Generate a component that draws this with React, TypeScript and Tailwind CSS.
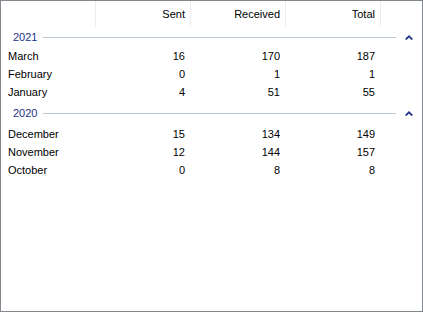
import React from 'react';

type Row = { month: string; sent: number; received: number; total: number };

const groups: { year: string; rows: Row[] }[] = [
  {
    year: '2021',
    rows: [
      { month: 'March', sent: 16, received: 170, total: 187 },
      { month: 'February', sent: 0, received: 1, total: 1 },
      { month: 'January', sent: 4, received: 51, total: 55 },
    ],
  },
  {
    year: '2020',
    rows: [
      { month: 'December', sent: 15, received: 134, total: 149 },
      { month: 'November', sent: 12, received: 144, total: 157 },
      { month: 'October', sent: 0, received: 8, total: 8 },
    ],
  },
];

function Chevron() {
  return (
    <svg width="8" height="5" viewBox="0 0 8 5" className="block">
      <path d="M0 4 L4 0 L8 4 L6.5 5 L4 2.5 L1.5 5 Z" fill="#1e3287" />
    </svg>
  );
}

export default function App() {
  return (
    <div
      className="w-[423px] h-[312px] bg-white border border-[#828790] text-[11px] text-black overflow-hidden"
      style={{ fontFamily: '"Liberation Sans", Arial, sans-serif' }}
    >
      <div className="flex h-[26px]">
        <div className="w-[95px] border-r border-[#ececec]" />
        <div className="w-[95px] border-r border-[#ececec] flex items-center justify-end pr-[5px]">Sent</div>
        <div className="w-[95px] border-r border-[#ececec] flex items-center justify-end pr-[5px]">Received</div>
        <div className="w-[95px] border-r border-[#ececec] flex items-center justify-end pr-[5px]">Total</div>
        <div className="flex-1" />
      </div>

      {groups.map((g, gi) => (
        <div key={g.year} className={gi === 0 ? 'mt-[1px]' : 'mt-[3px]'}>
          <div className={`flex items-center h-[18px] ${gi === 0 ? 'mb-[1px]' : 'mb-[3px]'}`}>
            <span className="ml-[12px] text-[#1e3287]">{g.year}</span>
            <div className="ml-[6px] flex-1 h-px bg-[#b9c6d6] mr-[8px] mt-[1px]" />
            <div className="w-[18px] pl-[1px] mt-[1px]">
              <Chevron />
            </div>
          </div>
          {g.rows.map(r => (
            <div key={r.month} className="flex h-[18px] items-center">
              <div className="w-[95px] pl-[7px]">{r.month}</div>
              <div className="w-[95px] text-right pr-[6px]">{r.sent}</div>
              <div className="w-[95px] text-right pr-[6px]">{r.received}</div>
              <div className="w-[95px] text-right pr-[6px]">{r.total}</div>
            </div>
          ))}
        </div>
      ))}
    </div>
  );
}
